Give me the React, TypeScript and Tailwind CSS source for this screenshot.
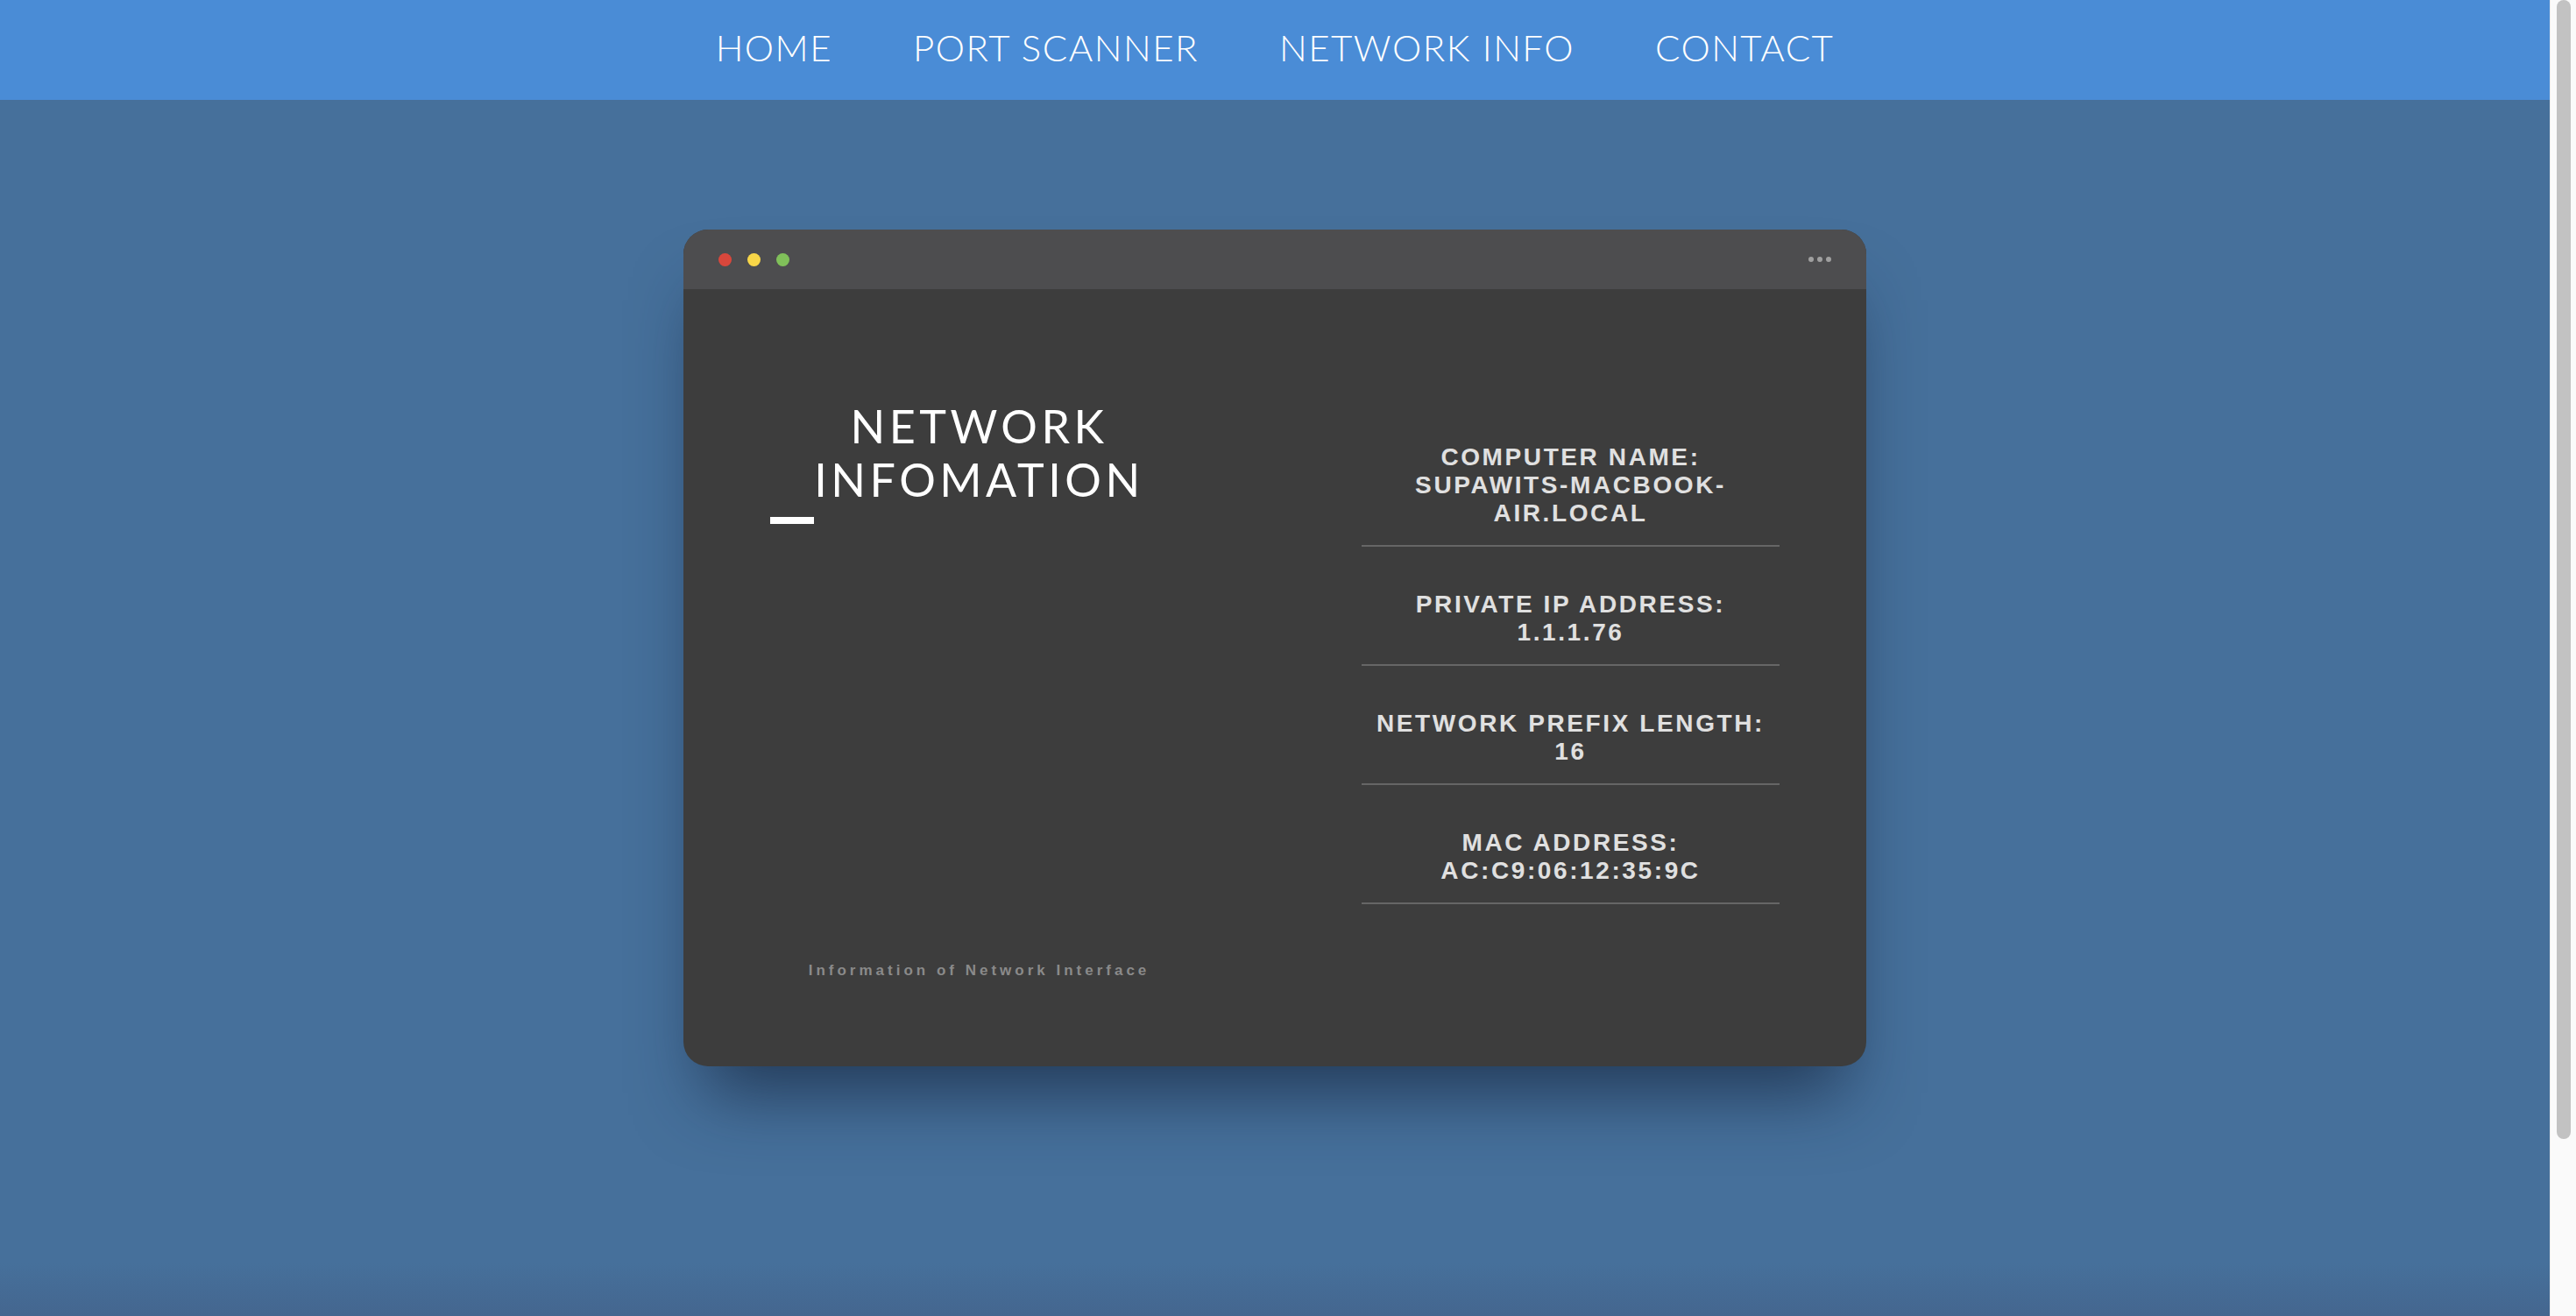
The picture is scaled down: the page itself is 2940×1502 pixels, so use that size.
import React from "react";

const links = ["HOME", "PORT SCANNER", "NETWORK INFO", "CONTACT"];

const info = [
  { label: "Computer Name:", value: "SUPAWITS-MACBOOK-AIR.LOCAL" },
  { label: "Private IP Address:", value: "1.1.1.76" },
  { label: "Network Prefix Length:", value: "16" },
  { label: "MAC Address:", value: "AC:C9:06:12:35:9C" },
];

function InfoItem({ label, value }: { label: string; value: string }) {
  return (
    <div className="border-b-2 border-[#666666] pt-[50px] pb-[20px] text-center">
      <p className="uppercase">{label}</p>
      <p className="uppercase">{value}</p>
    </div>
  );
}

function App() {
  return (
    <div className="flex h-[1502px] w-full overflow-hidden">
      <div className="flex flex-1 flex-col bg-[linear-gradient(to_bottom,#46709b_0%,#46709b_96%,#44668f_100%)]">
        <nav className="flex h-[114px] items-center justify-center gap-[92px] bg-[#4a8cd6] pb-[6px] font-['Lato',sans-serif] text-[42px] font-light tracking-[1.5px] text-white">
          {links.map((l) => (
            <a key={l} href="#">
              {l}
            </a>
          ))}
        </nav>

        <main className="flex flex-1 justify-center pt-[148px]">
          <div className="h-fit w-[1350px] overflow-hidden rounded-[28px] bg-[#3d3d3d] shadow-[0_55px_80px_-25px_rgba(20,35,60,0.7)]">
            <div className="flex h-[68px] items-center justify-between bg-[#4d4d4f] px-[40px]">
              <div className="flex gap-[18px]">
                <span className="h-[15px] w-[15px] rounded-full bg-[#d9473c]" />
                <span className="h-[15px] w-[15px] rounded-full bg-[#f8d648]" />
                <span className="h-[15px] w-[15px] rounded-full bg-[#80c05a]" />
              </div>
              <div className="flex gap-[4px]">
                <span className="h-[6px] w-[6px] rounded-full bg-[#a0a0a0]" />
                <span className="h-[6px] w-[6px] rounded-full bg-[#a0a0a0]" />
                <span className="h-[6px] w-[6px] rounded-full bg-[#a0a0a0]" />
              </div>
            </div>

            <div className="grid h-[887px] grid-cols-2 pt-[126px] pb-[99px]">
              <section className="flex flex-col">
                <h1 className="text-center font-['Lato',sans-serif] text-[52px] leading-[61px] tracking-[4.5px] text-white">
                  NETWORK
                  <br />
                  INFOMATION
                </h1>
                <div className="mt-[12px] ml-[99px] h-[8px] w-[50px] bg-white" />
                <p className="mt-auto text-center font-['Liberation_Sans',Arial,sans-serif] text-[17px] leading-[20px] font-bold tracking-[4px] text-[#8a8a8a]">
                  Information of Network Interface
                </p>
              </section>

              <section className="px-[99px] font-['Liberation_Sans',Arial,sans-serif] text-[28px] leading-[32px] font-bold tracking-[2.6px] text-[#e0e0e0]">
                {info.map((i) => (
                  <InfoItem key={i.label} label={i.label} value={i.value} />
                ))}
              </section>
            </div>
          </div>
        </main>
      </div>

      <div className="w-[30px] border-l border-[#ececec] bg-[#fafafa] pl-[7px]">
        <div className="h-[1300px] w-[16px] rounded-full bg-[#c2c2c2]" />
      </div>
    </div>
  );
}

export default App;
